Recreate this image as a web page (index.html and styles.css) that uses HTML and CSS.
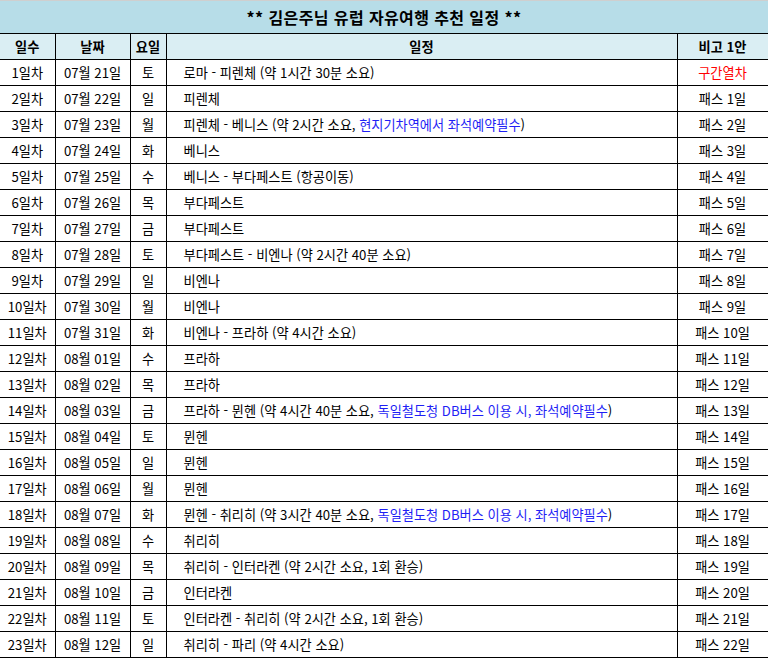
FILE: index.html
```html
<!DOCTYPE html>
<html lang="ko">
<head>
<meta charset="utf-8">
<link rel="stylesheet" href="styles.css">
</head>
<body>
<table class="plan">
<colgroup>
<col class="c-day"><col class="c-date"><col class="c-wd"><col class="c-plan"><col class="c-note">
</colgroup>
<thead>
<tr class="title"><th colspan="5">** 김은주님 유럽 자유여행 추천 일정 **</th></tr>
<tr class="head"><th>일수</th><th>날짜</th><th>요일</th><th>일정</th><th>비고 1안</th></tr>
</thead>
<tbody>
<tr><td>1일차</td><td>07월 21일</td><td>토</td><td class="pl">로마 - 피렌체 (약 1시간 30분 소요)</td><td class="red">구간열차</td></tr>
<tr><td>2일차</td><td>07월 22일</td><td>일</td><td class="pl">피렌체</td><td>패스 1일</td></tr>
<tr><td>3일차</td><td>07월 23일</td><td>월</td><td class="pl">피렌체 - 베니스 (약 2시간 소요, <span class="blue">현지기차역에서 좌석예약필수</span>)</td><td>패스 2일</td></tr>
<tr><td>4일차</td><td>07월 24일</td><td>화</td><td class="pl">베니스</td><td>패스 3일</td></tr>
<tr><td>5일차</td><td>07월 25일</td><td>수</td><td class="pl">베니스 - 부다페스트 (항공이동)</td><td>패스 4일</td></tr>
<tr><td>6일차</td><td>07월 26일</td><td>목</td><td class="pl">부다페스트</td><td>패스 5일</td></tr>
<tr><td>7일차</td><td>07월 27일</td><td>금</td><td class="pl">부다페스트</td><td>패스 6일</td></tr>
<tr><td>8일차</td><td>07월 28일</td><td>토</td><td class="pl">부다페스트 - 비엔나 (약 2시간 40분 소요)</td><td>패스 7일</td></tr>
<tr><td>9일차</td><td>07월 29일</td><td>일</td><td class="pl">비엔나</td><td>패스 8일</td></tr>
<tr><td>10일차</td><td>07월 30일</td><td>월</td><td class="pl">비엔나</td><td>패스 9일</td></tr>
<tr><td>11일차</td><td>07월 31일</td><td>화</td><td class="pl">비엔나 - 프라하 (약 4시간 소요)</td><td>패스 10일</td></tr>
<tr><td>12일차</td><td>08월 01일</td><td>수</td><td class="pl">프라하</td><td>패스 11일</td></tr>
<tr><td>13일차</td><td>08월 02일</td><td>목</td><td class="pl">프라하</td><td>패스 12일</td></tr>
<tr><td>14일차</td><td>08월 03일</td><td>금</td><td class="pl">프라하 - 뮌헨 (약 4시간 40분 소요, <span class="blue">독일철도청 DB버스 이용 시, 좌석예약필수</span>)</td><td>패스 13일</td></tr>
<tr><td>15일차</td><td>08월 04일</td><td>토</td><td class="pl">뮌헨</td><td>패스 14일</td></tr>
<tr><td>16일차</td><td>08월 05일</td><td>일</td><td class="pl">뮌헨</td><td>패스 15일</td></tr>
<tr><td>17일차</td><td>08월 06일</td><td>월</td><td class="pl">뮌헨</td><td>패스 16일</td></tr>
<tr><td>18일차</td><td>08월 07일</td><td>화</td><td class="pl">뮌헨 - 취리히 (약 3시간 40분 소요, <span class="blue">독일철도청 DB버스 이용 시, 좌석예약필수</span>)</td><td>패스 17일</td></tr>
<tr><td>19일차</td><td>08월 08일</td><td>수</td><td class="pl">취리히</td><td>패스 18일</td></tr>
<tr><td>20일차</td><td>08월 09일</td><td>목</td><td class="pl">취리히 - 인터라켄 (약 2시간 소요, 1회 환승)</td><td>패스 19일</td></tr>
<tr><td>21일차</td><td>08월 10일</td><td>금</td><td class="pl">인터라켄</td><td>패스 20일</td></tr>
<tr><td>22일차</td><td>08월 11일</td><td>토</td><td class="pl">인터라켄 - 취리히 (약 2시간 소요, 1회 환승)</td><td>패스 21일</td></tr>
<tr><td>23일차</td><td>08월 12일</td><td>일</td><td class="pl">취리히 - 파리 (약 4시간 소요)</td><td>패스 22일</td></tr>
</tbody>
</table>
</body>
</html>
```
FILE: styles.css
```css
html, body {
  margin: 0;
  padding: 0;
  background: #ffffff;
}
body {
  font-family: "Noto Sans CJK KR", "Noto Sans", sans-serif;
  font-size: 13.2px;
  color: #000;
}
.plan {
  border-collapse: collapse;
  table-layout: fixed;
  width: 768px;
  border-top: 1px solid #cfcfcf;
}
.c-day { width: 55px; }
.c-date { width: 75px; }
.c-wd { width: 36px; }
.c-plan { width: 511px; }
.c-note { width: 91px; }
.plan th, .plan td {
  border: 1px solid #000;
  padding: 0;
  text-align: center;
  white-space: nowrap;
  line-height: 18px;
  font-weight: normal;
}
.plan tr > :first-child {
  border-left: none;
}
.title th {
  height: 32px;
  background: #b7dde8;
  font-weight: bold;
  font-size: 16px;
  letter-spacing: 0.4px;
  border-top: none;
  border-left: none;
  border-right: none;
}
.head th {
  height: 25px;
  background: #daeef3;
  font-weight: bold;
}
.plan td {
  height: 25px;
}
.plan td.pl {
  text-align: left;
  padding-left: 17px;
}
.red { color: #ff0000; }
.blue { color: #1f1ff5; }
```
